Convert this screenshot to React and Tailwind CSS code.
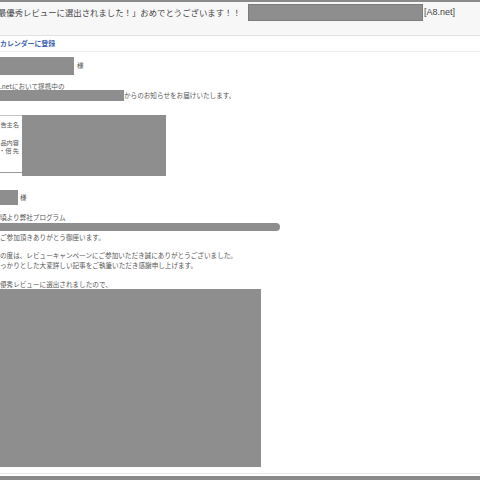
// App.jsx — received mail view: review campaign award notice

const jp = { fontFamily: '"Noto Sans CJK JP", "Noto Sans", sans-serif' }

// Blacked-out block used for hidden names / details
function Masked({ className = '' }) {
  return <div className={`bg-[#8e8e8e] shrink-0 ${className}`} />
}

function Line({ children, className = '' }) {
  return (
    <p className={`text-[6.6px] leading-[10px] h-[10px] whitespace-nowrap text-[#555] ${className}`}>
      {children}
    </p>
  )
}

export default function App() {
  return (
    <div className="w-[480px] h-[480px] overflow-hidden bg-white flex flex-col" style={jp}>
      {/* Window top edge */}
      <div className="h-[2px] bg-[#8a8a8a] shrink-0" />

      {/* ── Subject bar ─────────────────────────────── */}
      <header className="h-[34px] shrink-0 bg-[#f7f7f7] border-b border-[#e2e2e2] flex items-start pt-[2px]">
        <span className="ml-[-2px] shrink-0 whitespace-nowrap text-[8.4px] leading-[17px] text-[#444]">
          最優秀レビューに選出されました！」おめでとうございます！！
        </span>
        <Masked className="ml-[7px] w-[175px] h-[17px] border border-[#7c7c7c]" />
        <span className="ml-[1px] text-[9px] leading-[17px] text-[#444]" style={{ fontFamily: '"Liberation Sans", sans-serif' }}>
          [A8.net]
        </span>
      </header>

      {/* Calendar link row */}
      <div className="h-[16px] shrink-0 border-b border-[#ececec] flex items-center">
        <span className="text-[6.9px] font-bold text-[#3a64b0] whitespace-nowrap">カレンダーに登録</span>
      </div>

      {/* ── Mail body ───────────────────────────────── */}
      <main className="flex-1 flex flex-col pt-[5px]">
        <div className="flex items-center h-[18px]">
          <Masked className="w-[74px] h-[18px]" />
          <span className="ml-[3px] text-[6.6px] text-[#555]">様</span>
        </div>

        <p className="mt-[7px] text-[6.6px] leading-[8px] h-[8px] whitespace-nowrap text-[#555]">.netにおいて提携中の</p>
        <div className="flex items-center h-[11px]">
          <Masked className="w-[124px] h-[11px]" />
          <span className="text-[6.6px] whitespace-nowrap text-[#555]">からのお知らせをお届けいたします。</span>
        </div>

        {/* Detail table */}
        <div className="mt-[14px] flex w-[166px] border-t border-[#c4c4c4] h-[61px]">
          <div className="w-[22px] h-[57px] border-b border-[#9a9a9a] flex flex-col items-end pr-[3px] text-[6.2px] leading-[8px] text-[#555] whitespace-nowrap">
            <span className="mt-[5px]">告主名</span>
            <span className="mt-[10px]">品内容</span>
            <span>・倍 先</span>
          </div>
          <Masked className="w-[144px] h-[61px] mt-[-1px]" />
        </div>

        <div className="mt-[14px] flex items-center h-[15px]">
          <Masked className="w-[18px] h-[15px]" />
          <span className="ml-[2px] text-[6.6px] text-[#555]">様</span>
        </div>

        <Line className="mt-[7px]">頃より弊社プログラム</Line>
        <Masked className="mt-[1px] w-[280px] h-[8px] rounded-r-[4px]" />
        <Line className="mt-[1px]">ご参加頂きありがとう御座います。</Line>

        <Line className="mt-[8px]">の度は、レビューキャンペーンにご参加いただき誠にありがとうございました。</Line>
        <Line>っかりとした大変詳しい記事をご執筆いただき感謝申し上げます。</Line>

        <Line className="mt-[9px]">優秀レビューに選出されましたので、</Line>
        <Masked className="w-[261px] h-[178px]" />
      </main>

      {/* Window bottom edge */}
      <div className="h-[1px] bg-[#e6e6e6] shrink-0" />
      <div className="h-[2px] bg-white shrink-0" />
      <div className="h-[4px] bg-[#8a8a8a] shrink-0" />
    </div>
  )
}
